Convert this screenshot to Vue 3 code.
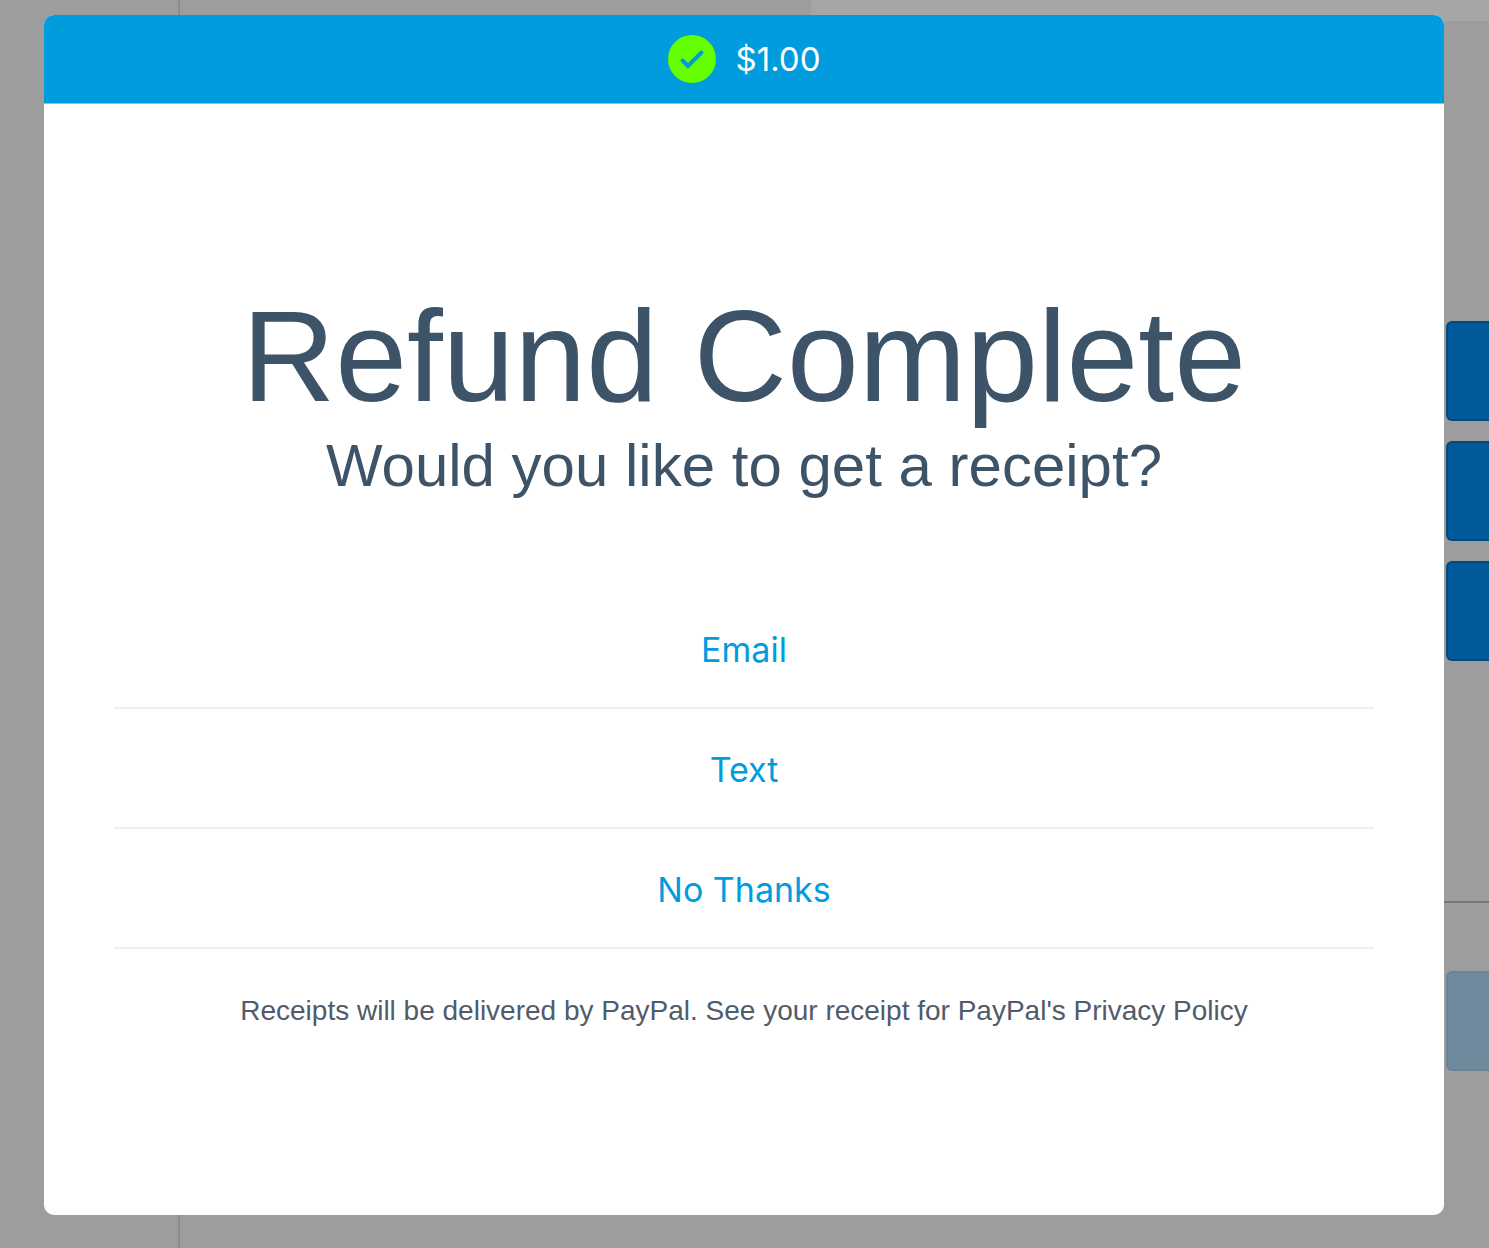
<script setup>
const amount = '$1.00'
const receiptOptions = ['Email', 'Text', 'No Thanks']
const actions = ['First action', 'Second action', 'Third action']
</script>

<template>
  <div class="screen">
    <div class="backdrop" inert>
      <div class="rail"></div>
      <div class="workspace">
        <div class="topbar"></div>
        <div class="panel">
          <div class="actions">
            <button v-for="action in actions" :key="action" type="button" class="action" :aria-label="action"></button>
          </div>
          <div class="submit">
            <button type="button" class="action muted" aria-label="Continue" disabled></button>
          </div>
        </div>
      </div>
    </div>

    <div class="overlay">
      <section class="dialog" role="dialog" aria-modal="true" aria-labelledby="dialog-title">
        <header class="dialog-header">
          <svg class="check" viewBox="0 0 48 48" aria-hidden="true">
            <circle cx="24" cy="24" r="24" fill="#6f0" />
            <path d="M14.5 25.5 L20 31 L33.5 17.5" fill="none" stroke="#009cde" stroke-width="4" stroke-linecap="round" />
          </svg>
          <span class="amount">{{ amount }}</span>
        </header>
        <div class="dialog-body">
          <h1 id="dialog-title" class="title">Refund Complete</h1>
          <p class="subtitle">Would you like to get a receipt?</p>
          <ul class="options">
            <li v-for="option in receiptOptions" :key="option">
              <button type="button" class="option">{{ option }}</button>
            </li>
          </ul>
          <p class="note">Receipts will be delivered by PayPal. See your receipt for PayPal's Privacy Policy</p>
        </div>
      </section>
    </div>
  </div>
</template>

<style>
body {
  margin: 0;
  background: #9d9d9d;
}
</style>

<style scoped>
.screen {
  display: grid;
  grid-template-columns: minmax(0, 1fr);
  min-height: 100vh;
  overflow: hidden;
  font-family: "Liberation Sans", Arial, sans-serif;
}
.backdrop,
.overlay {
  grid-area: 1 / 1;
}
.backdrop {
  display: flex;
  background: #9d9d9d;
}
.rail {
  box-sizing: border-box;
  width: 180px;
  border-right: 2px solid #8c8c8c;
}
.workspace {
  flex: 1;
  display: flex;
  flex-direction: column;
  align-items: flex-end;
}
.topbar {
  width: 678px;
  height: 21px;
  background: #a6a6a6;
}
.panel {
  width: 63px;
  padding-top: 300px;
}
.actions {
  display: flex;
  flex-direction: column;
  gap: 20px;
  padding: 0 0 240px 20px;
  border-bottom: 2px solid #777;
}
.submit {
  padding: 68px 0 0 20px;
}
.action {
  display: block;
  box-sizing: border-box;
  width: 100%;
  height: 100px;
  border: 2px solid #004b7c;
  border-right: 0;
  border-radius: 6px 0 0 6px;
  background: #005a99;
}
.action.muted {
  border-color: #6b8494;
  background: #6f8a9d;
}
.overlay {
  display: flex;
  z-index: 1;
  padding: 15px 45px 33px 44px;
}
.dialog {
  flex: 1;
  display: flex;
  flex-direction: column;
  border-radius: 10px;
  overflow: hidden;
  background: #fff;
}
.dialog-header {
  display: flex;
  align-items: center;
  justify-content: center;
  gap: 20px;
  height: 88px;
  border-bottom: 1px solid #a9b8c0;
  background: #009cde;
}
.check {
  width: 48px;
  height: 48px;
}
.amount {
  font: 33px/40px Inter, sans-serif;
  color: #fff;
}
.dialog-body {
  flex: 1;
  padding: 180px 70px;
  text-align: center;
}
.title,
.subtitle,
.note {
  margin: 0;
  font-weight: 400;
}
.title {
  font-size: 129px;
  line-height: 144px;
  color: #3d5368;
}
.subtitle {
  font-size: 60px;
  line-height: 76px;
  color: #3d5368;
}
.options {
  margin: 85px 0 0;
  padding: 0;
  list-style: none;
}
.option {
  display: block;
  box-sizing: border-box;
  width: 100%;
  height: 120px;
  padding: 4px 0 0;
  border: 0;
  border-bottom: 2px solid #eaeff3;
  background: none;
  font: 34px/40px Inter, sans-serif;
  color: #009cde;
  cursor: pointer;
}
.note {
  margin-top: 44px;
  font-size: 28px;
  line-height: 36px;
  color: #515b69;
}
</style>
